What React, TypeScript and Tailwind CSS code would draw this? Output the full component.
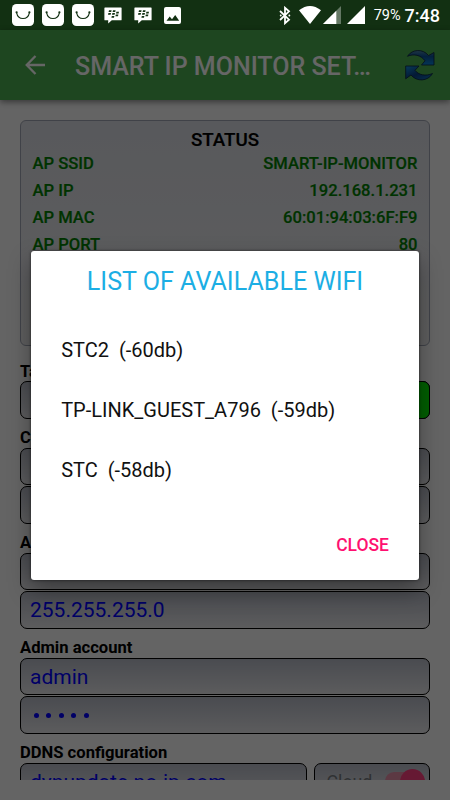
import React, { useState } from "react";

interface StatusRow_I {
  label: string;
  value: string;
}

interface Wifi_I {
  ssid: string;
  db: number;
}

const statusRows: StatusRow_I[] = [
  { label: "AP SSID", value: "SMART-IP-MONITOR" },
  { label: "AP IP", value: "192.168.1.231" },
  { label: "AP MAC", value: "60:01:94:03:6F:F9" },
  { label: "AP PORT", value: "80" },
];

const wifiList: Wifi_I[] = [
  { ssid: "STC2", db: -60 },
  { ssid: "TP-LINK_GUEST_A796", db: -59 },
  { ssid: "STC", db: -58 },
];

function BagIcon() {
  return (
    <svg width="22" height="22" viewBox="0 0 22 22">
      <rect width="22" height="22" rx="4.5" fill="#fff" />
      <path d="M4.600 8.600C6 16.500 16 16.500 17.400 8.600" fill="none" stroke="#123012" strokeWidth="1.100" />
      <circle cx="4.600" cy="8.300" r="1.100" fill="#123012" />
      <circle cx="17.400" cy="8.300" r="1.100" fill="#123012" />
    </svg>
  );
}

function MessengerIcon() {
  return (
    <svg width="18" height="17" viewBox="0 0 18 17">
      <path d="M1 0.500h16q.6 0 .6.600v11.600q0 .6-.6.600H7.800L4.200 16.500v-3.200H1q-.6 0-.6-.6V1.100q0-.6.600-.6z" fill="#fff" />
      <path
        d="M5 3.200h2.600l-.4 1.700H4.600zM9 3.200h2.600l-.4 1.700H8.600zM4.400 6.100H7l-.4 1.700H4zM8.400 6.100H11l-.4 1.700H8zM12.400 4.700H15l-.4 1.700H12zM11.800 7.600h2.600L14 9.300h-2.600zM7.800 9h2.600l-.4 1.700H7.400z"
        fill="#123012"
      />
    </svg>
  );
}

function PictureIcon() {
  return (
    <svg width="17" height="17" viewBox="0 0 17 17">
      <rect width="17" height="17" rx="2" fill="#fff" />
      <path d="M2.500 13.800l3.200-4.200 2.300 2.600 3.200-4.100 4 5.700z" fill="#123012" />
    </svg>
  );
}

function StatusBar() {
  return (
    <div className="h-[30px] bg-[#123012] flex items-center justify-between pl-3 pr-[10px]">
      <div className="flex items-center">
        <div className="flex items-center gap-2">
          <BagIcon />
          <BagIcon />
          <BagIcon />
        </div>
        <div className="flex items-center gap-3 ml-[10px]">
          <MessengerIcon />
          <MessengerIcon />
        </div>
        <div className="ml-[12px]">
          <PictureIcon />
        </div>
      </div>
      <div className="flex items-center text-white">
        <svg width="12" height="19" viewBox="0 0 12 19" fill="none" stroke="#fff" strokeWidth="1.800">
          <path d="M1 5l9 8.700L6 17.200V1.800l4 3.500L1 14" />
          <path d="M1.700 9.500h.1M10.300 9.500h.1" strokeWidth="1.800" strokeLinecap="round" />
        </svg>
        <svg className="ml-[8px]" width="22" height="18" viewBox="0 0 22 18">
          <path d="M11 18L0 4.300Q11-4.300 22 4.300z" fill="#fff" />
        </svg>
        <svg className="ml-[2px]" width="18" height="18" viewBox="0 0 18 18">
          <path d="M18 0v18H0z" fill="#fff" fillOpacity=".35" />
          <path d="M13.300 4.700V18H0z" fill="#fff" />
        </svg>
        <svg className="ml-[6px]" width="18" height="18" viewBox="0 0 18 18">
          <path d="M18 0v18H0z" fill="#fff" />
        </svg>
        <span className="ml-[9px] pt-[2px] text-[14.500px] leading-none">79%</span>
        <span className="ml-[4px] pt-[1px] text-[18px] leading-none font-medium">7:48</span>
      </div>
    </div>
  );
}

function SyncIcon() {
  return (
    <svg width="30" height="31" viewBox="0 0 30 31">
      <defs>
        <linearGradient id="syncTop" x1="0" y1="0" x2="0" y2="1">
          <stop offset="0" stopColor="#4d86a8" />
          <stop offset=".4" stopColor="#0c4f96" />
          <stop offset="1" stopColor="#0a86d8" />
        </linearGradient>
        <linearGradient id="syncBottom" x1="0" y1="0" x2="1" y2="1">
          <stop offset="0" stopColor="#1592de" />
          <stop offset=".5" stopColor="#0a3f86" />
          <stop offset="1" stopColor="#1176c0" />
        </linearGradient>
      </defs>
      <g stroke="#0a2240" strokeWidth=".8" strokeLinejoin="round">
        <path d="M2.500 6.300C7-1 18-1.500 23.500 5.500L29 2.500V15H16.500l3.500-4.200C16 5 8.500 3.500 2.500 6.300z" fill="url(#syncTop)" />
        <path d="M27.500 23.500C23 31.500 11.500 32 6 25L.7 28.800V16H14l-4 4.300C13.500 25 20.500 26.500 27.500 23.500z" fill="url(#syncBottom)" />
      </g>
    </svg>
  );
}

function AppBar() {
  return (
    <div className="relative z-10 h-[70px] shrink-0 bg-[#4caf50] text-white flex items-center pl-[25px] pr-[15px] shadow-[0_2px_6px_rgba(0,0,0,0.45)]">
      <svg width="21" height="20" viewBox="0 0 21 20" fill="none" stroke="#fff" strokeWidth="2.300">
        <path d="M20 10H2M10.500 1L1.700 10l8.800 9" />
      </svg>
      <h1 className="ml-[29px] flex-1 text-[25px] font-medium whitespace-nowrap pt-[3px]">SMART IP MONITOR SET…</h1>
      <SyncIcon />
    </div>
  );
}

function Label({ children }: any) {
  return <div className="h-[28.750px] pt-[8.200px] text-[16.600px] leading-[22px] font-bold text-black">{children}</div>;
}

function Field({ children }: any) {
  return (
    <div className="h-[37.500px] w-full rounded-[7px] border border-black bg-linear-to-b from-[#b8bcc8] to-[#e6e6e9] pl-[9px] text-[21px] leading-[37.500px] text-[#0000ff] overflow-hidden whitespace-nowrap">
      {children}
    </div>
  );
}

function Settings() {
  return (
    <div className="h-[680px] overflow-hidden px-5 pt-5">
      <div className="h-[226px] rounded-[6px] border border-[#a0a6b4] bg-linear-to-b from-[#dcdee5] to-[#ebebed] px-[11.500px] pt-[6px]">
        <h2 className="pt-[1px] -mb-[1px] text-center text-[18.750px] leading-[25px] font-medium text-black [-webkit-text-stroke:0.2px]">STATUS</h2>
        {statusRows.map((row: StatusRow_I, index: number) => (
          <div key={index} className="flex justify-between h-[27px] text-[16.600px] leading-[24px] font-medium text-[#008000] [-webkit-text-stroke:0.2px]">
            <span>{row.label}</span>
            <span>{row.value}</span>
          </div>
        ))}
      </div>

      <div className="pt-[6.500px]">
        <Label>Target</Label>
        <div className="flex h-[37.500px]">
          <Field />
          <div className="-ml-[60px] w-[60px] shrink-0 rounded-[7px] border border-black bg-[#00ee00]" />
        </div>
      </div>
      <div>
        <Label>Connection</Label>
        <div className="flex flex-col gap-[1.250px]">
          <Field />
          <Field />
        </div>
      </div>
      <div>
        <Label>AP configuration</Label>
        <div className="flex flex-col gap-[1.250px]">
          <Field />
          <Field>255.255.255.0</Field>
        </div>
      </div>
      <div>
        <Label>Admin account</Label>
        <div className="flex flex-col gap-[1.250px]">
          <Field>admin</Field>
          <Field>
            <div className="flex items-center gap-[7.500px] h-full pl-[3.500px]">
              {[0, 1, 2, 3, 4].map((dot) => (
                <span key={dot} className="size-[5px] rounded-full bg-[#0000ff]" />
              ))}
            </div>
          </Field>
        </div>
      </div>
      <div>
        <Label>DDNS configuration</Label>
        <div className="flex gap-[7.500px]">
          <div className="w-[286.500px] shrink-0">
            <Field>dynupdate.no-ip.com</Field>
          </div>
          <div className="h-[37.500px] flex-1 rounded-[7px] border border-black bg-linear-to-b from-[#b8bcc8] to-[#e6e6e9] flex items-center justify-between pl-[11.500px] pr-[4px] text-[17.800px] text-[#777b80]">
            <span className="pt-[3px]">Cloud</span>
            <div className="w-[40px] h-[18px] rounded-full bg-[#e58fa9] flex items-center justify-end">
              <span className="size-[25px] shrink-0 rounded-full bg-[#ff4081]" />
            </div>
          </div>
        </div>
      </div>
    </div>
  );
}

export default function App() {
  const [open, setOpen] = useState(true);

  return (
    <div className="w-[450px] h-[800px] overflow-hidden flex flex-col font-[Roboto,sans-serif]">
      <StatusBar />
      <div className="relative flex-1 flex flex-col bg-[#fafafa]">
        <AppBar />
        <Settings />
        {open && (
          <div className="absolute inset-0 z-20 bg-black/60 flex justify-center items-start pt-[220.500px]">
            <div className="w-[388px] h-[329px] rounded-[3px] bg-white shadow-[0_10px_22px_rgba(0,0,0,0.35),0_0_3px_rgba(0,0,0,0.6)] flex flex-col">
              <h2 className="pt-[13px] text-center text-[25.100px] leading-[36px] text-[#1caee4]">LIST OF AVAILABLE WIFI</h2>
              <ul className="pt-[20px] pl-[30.200px] flex flex-col">
                {wifiList.map((wifi: Wifi_I, index: number) => (
                  <li key={index} className="h-[60px] text-[20px] leading-[60px] text-[#111] whitespace-pre">
                    {`${wifi.ssid}  (${wifi.db}db)`}
                  </li>
                ))}
              </ul>
              <div className="mt-auto pb-[23px] pr-[30px] flex justify-end">
                <button className="text-[17.500px] leading-[24px] font-medium text-[#ff1070]" onClick={() => setOpen(false)}>
                  CLOSE
                </button>
              </div>
            </div>
          </div>
        )}
      </div>
    </div>
  );
}
